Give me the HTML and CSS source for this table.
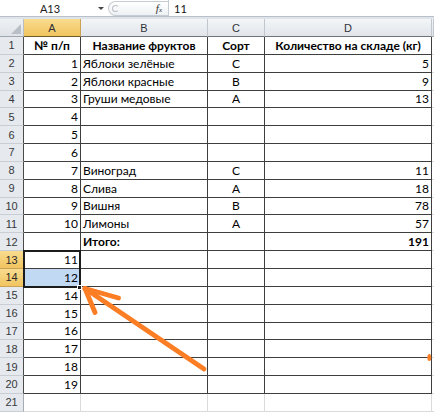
FILE: index.html
```html
<!DOCTYPE html>
<html>
<head>
<meta charset="utf-8">
<link rel="stylesheet" href="styles.css">
</head>
<body>
<div class="app">
  <div class="fbar">
    <div class="namebox"><span class="nbtext">A13</span><span class="dd"></span></div>
    <div class="fbtns"><span class="grip"></span><span class="fx">f<span class="fxs">x</span></span></div>
    <div class="finput">11</div>
  </div>
  <div class="gap"></div>
  <div class="sheet">
    <div class="row hdr"><div class="corner"><span class="tri"></span></div><div class="ch sel">A</div><div class="ch">B</div><div class="ch">C</div><div class="ch">D</div><div class="ch e"></div></div>
    <div class="row"><div class="rh tb">1</div><div class="c t m b">№ п/п</div><div class="c t m b">Название фруктов</div><div class="c t m b">Сорт</div><div class="c t m b">Количество на складе (кг)</div><div class="c"></div></div>
    <div class="row"><div class="rh tb">2</div><div class="c t r">1</div><div class="c t">Яблоки зелёные</div><div class="c t m">С</div><div class="c t r">5</div><div class="c"></div></div>
    <div class="row"><div class="rh tb">3</div><div class="c t r">2</div><div class="c t">Яблоки красные</div><div class="c t m">В</div><div class="c t r">9</div><div class="c"></div></div>
    <div class="row"><div class="rh tb">4</div><div class="c t r">3</div><div class="c t">Груши медовые</div><div class="c t m">А</div><div class="c t r">13</div><div class="c"></div></div>
    <div class="row"><div class="rh tb">5</div><div class="c t r">4</div><div class="c t"></div><div class="c t"></div><div class="c t"></div><div class="c"></div></div>
    <div class="row"><div class="rh tb">6</div><div class="c t r">5</div><div class="c t"></div><div class="c t"></div><div class="c t"></div><div class="c"></div></div>
    <div class="row"><div class="rh tb">7</div><div class="c t r">6</div><div class="c t"></div><div class="c t"></div><div class="c t"></div><div class="c"></div></div>
    <div class="row"><div class="rh tb">8</div><div class="c t r">7</div><div class="c t">Виноград</div><div class="c t m">С</div><div class="c t r">11</div><div class="c"></div></div>
    <div class="row"><div class="rh tb">9</div><div class="c t r">8</div><div class="c t">Слива</div><div class="c t m">А</div><div class="c t r">18</div><div class="c"></div></div>
    <div class="row"><div class="rh tb">10</div><div class="c t r">9</div><div class="c t">Вишня</div><div class="c t m">В</div><div class="c t r">78</div><div class="c"></div></div>
    <div class="row"><div class="rh tb">11</div><div class="c t r">10</div><div class="c t">Лимоны</div><div class="c t m">А</div><div class="c t r">57</div><div class="c"></div></div>
    <div class="row"><div class="rh tb">12</div><div class="c t r"></div><div class="c t b">Итого:</div><div class="c t"></div><div class="c t r b">191</div><div class="c"></div></div>
    <div class="row"><div class="rh tb hs">13</div><div class="c t r">11</div><div class="c t"></div><div class="c t"></div><div class="c t"></div><div class="c"></div></div>
    <div class="row"><div class="rh tb hs">14</div><div class="c t r blue">12</div><div class="c t"></div><div class="c t"></div><div class="c t"></div><div class="c"></div></div>
    <div class="row"><div class="rh tb">15</div><div class="c t r">14</div><div class="c t"></div><div class="c t"></div><div class="c t"></div><div class="c"></div></div>
    <div class="row"><div class="rh tb">16</div><div class="c t r">15</div><div class="c t"></div><div class="c t"></div><div class="c t"></div><div class="c"></div></div>
    <div class="row"><div class="rh tb">17</div><div class="c t r">16</div><div class="c t"></div><div class="c t"></div><div class="c t"></div><div class="c"></div></div>
    <div class="row"><div class="rh tb">18</div><div class="c t r">17</div><div class="c t"></div><div class="c t"></div><div class="c t"></div><div class="c"></div></div>
    <div class="row"><div class="rh tb">19</div><div class="c t r">18</div><div class="c t"></div><div class="c t"></div><div class="c t"></div><div class="c"></div></div>
    <div class="row"><div class="rh tb">20</div><div class="c t r">19</div><div class="c t"></div><div class="c t"></div><div class="c t"></div><div class="c"></div></div>
    <div class="row"><div class="rh">21</div><div class="c"></div><div class="c"></div><div class="c"></div><div class="c"></div><div class="c"></div></div>
  </div>
  <div class="selbox"></div>
  <div class="handle"></div>
  <svg class="arrow" width="434" height="414" viewBox="0 0 434 414">
    <g stroke="#fb7d24" stroke-width="4.8" stroke-linecap="round" fill="none">
      <path d="M204 369 L85 288.5"/>
      <path d="M85 288.5 L118.5 298"/>
      <path d="M85 288.5 L95 312.5"/>
    </g>
    <ellipse cx="429.3" cy="357.5" rx="1.9" ry="3.5" fill="#fb7d24"/>
  </svg>
</div>
</body>
</html>
```
FILE: styles.css
```css
* { box-sizing: border-box; }
html, body { margin: 0; padding: 0; background: #fff; overflow: hidden; }
body { width: 434px; height: 414px; font-family: Lato, "Liberation Sans", Arial, sans-serif; font-size: 12px; color: #000; }
.app { position: relative; width: 434px; height: 414px; overflow: hidden; }

.fbar { display: flex; height: 17px; background: #fff; border-bottom: 1px solid #b9c0c9; }
.namebox { width: 108px; display: flex; align-items: center; position: relative; }
.nbtext { flex: 1; text-align: center; font-size: 11px; color: #222; padding-left: 2px; padding-top: 1px; }
.dd { width: 0; height: 0; border-left: 3px solid transparent; border-right: 3px solid transparent; border-top: 3px solid #444; margin-right: 4px; margin-top: 1px; }
.fbtns { width: 60px; margin: 1px 0 0 0; height: 15px; border: 1px solid #c6ccd3; border-right: none; border-radius: 8px 0 0 8px; background: linear-gradient(#ffffff, #eef1f4); display: flex; align-items: center; justify-content: space-between; padding: 0 6px 0 3px; }
.grip { width: 7px; height: 7px; border: 1px solid #b8bec6; border-radius: 50%; border-right-color: transparent; }
.fx { font-family: "Liberation Serif", serif; font-style: italic; font-size: 11px; color: #333; line-height: 1; }
.fxs { font-size: 7px; font-style: italic; }
.finput { flex: 1; border-left: 1px solid #c6ccd3; padding-left: 5px; font-size: 11px; display: flex; align-items: center; padding-top: 1px; color: #111; }
.gap { height: 2px; background: #dfe4ea; }

.sheet { display: flex; flex-direction: column; }
.row { display: grid; grid-template-columns: 24px 57px 127px 57px 167px 2px; height: 17.85px; }
.row.hdr { height: 18px; }

.corner { background: linear-gradient(#eef1f4, #dfe3e8); border-right: 1px solid #b8bec6; border-bottom: 1px solid #9fa7b0; position: relative; }
.tri { position: absolute; right: 2px; bottom: 2px; width: 0; height: 0; border-left: 10px solid transparent; border-bottom: 10px solid #b9bfc6; }
.ch { background: linear-gradient(#f3f5f7, #e1e5ea); border-right: 1px solid #c1c7ce; border-bottom: 1px solid #6f747a; display: flex; align-items: center; justify-content: center; font-family: "Liberation Sans", Arial, sans-serif; font-size: 11px; color: #2f3337; }
.ch.e { border-bottom-color: #9fa7b0; }
.ch.sel { background: linear-gradient(#f9dc8f, #f1c45f); border-right-color: #c9a255; border-bottom-color: #6f5a2a; }

.rh { background: #e6e9ee; border-right: 1px solid #a5acb4; border-bottom: 1px solid #c9ced4; display: flex; align-items: center; justify-content: center; font-family: "Liberation Sans", Arial, sans-serif; font-size: 11px; color: #35393d; }
.rh.tb { border-right-color: #4a4a4a; }
.rh.hs { background: linear-gradient(#f9dc8f, #f1c45f); border-bottom-color: #c9a255; color: #2a2a2a; }

.c { border-right: 1px solid #d9dadb; border-bottom: 1px solid #d9dadb; display: flex; align-items: flex-end; justify-content: flex-start; padding: 0 2px 1px 2px; white-space: nowrap; overflow: hidden; line-height: 14px; }
.c.t { border-right-color: #3e3e3e; border-bottom-color: #3e3e3e; }
.c.r { justify-content: flex-end; }
.c.m { justify-content: center; }
.c.b { font-weight: bold; }
.c.blue { background: #c2d9f4; }

.selbox { position: absolute; left: 23px; top: 250px; width: 58px; height: 38px; border: 2px solid #1c1c1c; pointer-events: none; }
.handle { position: absolute; left: 77px; top: 284.5px; width: 5px; height: 5px; background: #1c1c1c; border: 1px solid #fff; }
.arrow { position: absolute; left: 0; top: 0; pointer-events: none; }
```
